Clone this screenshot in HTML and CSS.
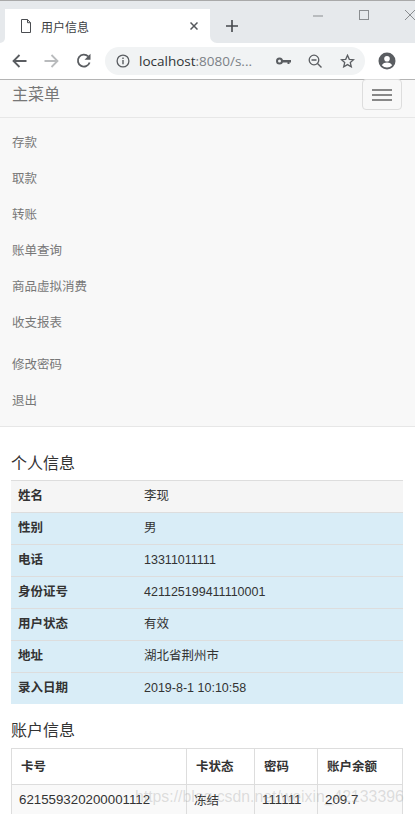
FILE: index.html
```html
<!DOCTYPE html>
<html lang="zh-CN">
<head>
  <meta charset="UTF-8" />
  <meta name="viewport" content="width=device-width, initial-scale=1.0" />
  <title>用户信息</title>
  <link rel="stylesheet" href="styles.css">
</head>
<body>
  <!-- 浏览器外框 -->
  <div class="tabbar">
    <div class="gap-left"></div>
    <div class="tab">
      <svg class="tab-doc" width="12" height="14" viewBox="0 0 12 14"><path d="M1.5 .5h6l3 3.2v9.800h-9z M7.500 .5v3.200h3" fill="none" stroke="#4a4d51" stroke-width="1"/></svg>
      <span class="tab-title">用户信息</span>
      <svg class="tab-close" width="8" height="8" viewBox="0 0 8 8"><path d="M.5 .5l7 7M7.500 .5l-7 7" stroke="#55585c" stroke-width="1.500"/></svg>
    </div>
    <div class="gap-right">
      <svg class="new-tab" width="12" height="12" viewBox="0 0 12 12"><path d="M6 0v12M0 6h12" stroke="#45484c" stroke-width="1.600"/></svg>
      <div class="win-btns">
        <svg width="10" height="2" viewBox="0 0 10 2"><path d="M0 1h10" stroke="#8a8d90" stroke-width="1"/></svg>
        <svg class="win-max" width="10" height="10" viewBox="0 0 10 10"><rect x=".5" y=".5" width="9" height="9" fill="none" stroke="#8a8d90"/></svg>
        <svg class="win-close" width="10" height="10" viewBox="0 0 10 10"><path d="M0 0l10 10M10 0l-10 10" stroke="#8a8d90" stroke-width="1"/></svg>
      </div>
    </div>
  </div>

  <div class="toolbar">
    <svg width="15" height="14" viewBox="0 0 15 14"><path d="M14.500 7H2M7.500 1L1.500 7l6 6" fill="none" stroke="#5a5d61" stroke-width="1.800"/></svg>
    <svg class="fwd" width="15" height="14" viewBox="0 0 15 14"><path d="M.5 7H13M7.500 1l6 6-6 6" fill="none" stroke="#b9bbbd" stroke-width="1.800"/></svg>
    <svg class="reload" width="16" height="16" viewBox="0 0 16 16"><path d="M13.600 9.500A6 6 0 1 1 12.200 3.400" fill="none" stroke="#5a5d61" stroke-width="1.800"/><path d="M14.500 .8v6h-6z" fill="#5a5d61"/></svg>
    <div class="omnibox">
      <svg width="14" height="14" viewBox="0 0 14 14"><circle cx="7" cy="7" r="5.900" fill="none" stroke="#5a5d61" stroke-width="1.300"/><path d="M7 6v4.200M7 3.500v1.400" stroke="#5a5d61" stroke-width="1.400"/></svg>
      <span class="url">localhost<span class="url-rest">:8080/s...</span></span>
      <svg class="key" width="15" height="8" viewBox="0 0 15 8"><circle cx="3.500" cy="4" r="2.500" fill="none" stroke="#5a5d61" stroke-width="2"/><path d="M6 3h9v2.500h-1.500V7h-2V5.500H6z" fill="#5a5d61"/></svg>
      <svg class="zoom-out" width="14" height="14" viewBox="0 0 14 14"><circle cx="6" cy="6" r="4.800" fill="none" stroke="#5a5d61" stroke-width="1.300"/><path d="M9.500 9.500L13.500 13.500M3.500 6h5" stroke="#5a5d61" stroke-width="1.400"/></svg>
      <svg class="star" width="15" height="14" viewBox="0 0 15 14"><path d="M7.500 1.300l1.800 4 4.300 .4-3.300 2.900 1 4.200-3.800-2.200-3.800 2.200 1-4.200-3.300-2.900 4.300-.4z" fill="none" stroke="#5a5d61" stroke-width="1.300"/></svg>
    </div>
    <svg class="avatar" width="18" height="18" viewBox="0 0 18 18"><circle cx="9" cy="9" r="8.500" fill="#5a5d61"/><circle cx="9" cy="6.800" r="2.800" fill="#fff"/><path d="M3.800 13.200c1.200-2 3.200-2.700 5.200-2.700s4 .7 5.200 2.700a6.800 6.800 0 0 1-10.400 0z" fill="#fff"/></svg>
  </div>

  <!-- 导航栏 -->
  <nav class="navbar">
    <div class="navbar-head">
      <a class="brand">主菜单</a>
      <button class="toggle"><span></span><span></span><span></span></button>
    </div>
    <div class="navbar-menu">
      <ul class="nav-list">
        <li>存款</li>
        <li>取款</li>
        <li>转账</li>
        <li>账单查询</li>
        <li>商品虚拟消费</li>
        <li>收支报表</li>
      </ul>
      <ul class="nav-list nav-list-right">
        <li>修改密码</li>
        <li>退出</li>
      </ul>
    </div>
  </nav>

  <div class="content">
    <h4>个人信息</h4>
    <table class="info-table">
      <tr class="row-active"><th>姓名</th><td>李现</td></tr>
      <tr><th>性别</th><td>男</td></tr>
      <tr><th>电话</th><td class="num">13311011111</td></tr>
      <tr><th>身份证号</th><td class="num">421125199411110001</td></tr>
      <tr><th>用户状态</th><td>有效</td></tr>
      <tr><th>地址</th><td>湖北省荆州市</td></tr>
      <tr><th>录入日期</th><td class="num">2019-8-1 10:10:58</td></tr>
    </table>

    <h4 class="h-account">账户信息</h4>
    <table class="account-table">
      <tr>
        <th class="col-card">卡号</th>
        <th class="col-status">卡状态</th>
        <th class="col-pwd">密码</th>
        <th>账户余额</th>
      </tr>
      <tr class="row-striped">
        <td class="num">621559320200001112</td>
        <td>冻结</td>
        <td class="num">111111</td>
        <td class="num">209.7</td>
      </tr>
    </table>
  </div>

  <div class="watermark">https://blog.csdn.net/weixin_42133396</div>
</body>
</html>
```

FILE: styles.css
```css
html, body {
  height: 814px;
  overflow: hidden;
}
body {
  margin: 0;
  position: relative;
  font-family: "Liberation Sans", "Noto Sans CJK SC", sans-serif;
  font-size: 12.5px;
  color: #333;
  background: #fff;
}

/* 浏览器外框 */
.tabbar {
  display: flex;
  height: 42px;
  border-top: 1px solid #a9a9a9;
  background: linear-gradient(#e6e9ec 8px, #fff 8px);
}
.gap-left {
  width: 5px;
  flex-shrink: 0;
  background: #e6e9ec;
  border-bottom-right-radius: 5px;
}
.tab {
  width: 205px;
  flex-shrink: 0;
  margin-top: 8px;
  padding: 0 12px 0 15px;
  box-sizing: border-box;
  display: flex;
  align-items: center;
  background: #fff;
  border-radius: 7px 7px 0 0;
}
.tab-doc {
  margin-top: -1px;
}
.tab-title {
  margin-left: 9px;
  font-size: 12px;
  color: #3c4043;
  flex: 1;
}
.tab-close {
  margin-right: 0;
  margin-top: -1px;
}
.gap-right {
  flex: 1;
  min-width: 0;
  display: flex;
  background: #e6e9ec;
  border-bottom-left-radius: 7px;
}
.new-tab {
  flex-shrink: 0;
  margin: 19px 0 0 16px;
}
.win-btns {
  display: flex;
  align-items: flex-start;
  margin-left: 75px;
  padding-top: 9px;
}
.win-btns svg:first-child {
  margin-top: 5px;
}
.win-max {
  margin-left: 36px;
}
.win-close {
  margin-left: 36px;
  flex-shrink: 0;
}

.toolbar {
  height: 36px;
  display: flex;
  align-items: center;
  padding-left: 12px;
  border-bottom: 1px solid #b4b4b4;
  background: #fff;
}
.fwd {
  margin-left: 17px;
}
.reload {
  margin-left: 17px;
}
.omnibox {
  width: 260px;
  height: 28px;
  margin-left: 13px;
  padding-left: 11px;
  box-sizing: border-box;
  display: flex;
  align-items: center;
  background: #f1f3f4;
  border-radius: 14px;
}
.url {
  margin-left: 9px;
  width: 136px;
  font-family: "Open Sans", "Liberation Sans", sans-serif;
  font-size: 13.5px;
  color: #303336;
  white-space: nowrap;
}
.url-rest {
  color: #7c8186;
}
.key {
  margin-left: 1px;
}
.zoom-out {
  margin-left: 17px;
}
.star {
  margin-left: 18px;
}
.avatar {
  margin-left: 13px;
}

/* 导航栏 */
.navbar {
  background: #f8f8f8;
  border-bottom: 1px solid #e7e7e7;
  color: #777;
}
.navbar-head {
  height: 37px;
  display: flex;
  justify-content: space-between;
  padding: 0 12px;
  border-bottom: 1px solid #e7e7e7;
}
.brand {
  font-size: 16px;
  line-height: 30px;
}
.toggle {
  width: 40px;
  height: 31px;
  margin: -1px 1px 0 0;
  padding: 0;
  display: flex;
  flex-direction: column;
  align-items: center;
  justify-content: center;
  gap: 3px;
  background: #f8f8f8;
  border: 1px solid #ddd;
  border-radius: 4px;
}
.toggle span {
  width: 20px;
  height: 2px;
  background: #888;
}
.navbar-menu {
  padding: 7px 12px;
}
.nav-list {
  list-style: none;
  margin: 0;
  padding: 0;
}
.nav-list li {
  height: 36px;
  line-height: 36px;
}
.nav-list-right {
  margin-top: 6px;
}

/* 内容 */
.content {
  padding: 0 12px 0 11px;
}
h4 {
  margin: 26px 0 5px;
  height: 22px;
  line-height: 22px;
  font-size: 16px;
  font-weight: 400;
  color: #333;
}
.h-account {
  margin: 16px 0 6px;
}
table {
  width: 392px;
  border-collapse: collapse;
  table-layout: fixed;
}
.info-table th, .info-table td {
  height: 27px;
  padding: 0 7px 4px;
  border-top: 1px solid #ddd;
  text-align: left;
  background: #d9edf7;
}
.info-table th {
  width: 112px;
}
.info-table .row-active th, .info-table .row-active td {
  background: #f5f5f5;
}
.info-table .num {
  font-size: 12.5px;
  padding-bottom: 2px;
}
.account-table th, .account-table td {
  border: 1px solid #ddd;
  text-align: left;
}
.account-table th {
  height: 32px;
  padding: 0 9px 3px;
}
.account-table td {
  height: 28px;
  padding: 0 7px 1px;
  background: #f9f9f9;
}
.account-table .num {
  font-size: 13.3px;
}
.col-card {
  width: 156px;
}
.col-status {
  width: 49px;
}
.col-pwd {
  width: 44px;
}

/* 水印 */
.watermark {
  position: absolute;
  left: 135px;
  top: 788px;
  font-size: 15.8px;
  white-space: nowrap;
  color: rgba(150, 150, 150, 0.3);
}
```
